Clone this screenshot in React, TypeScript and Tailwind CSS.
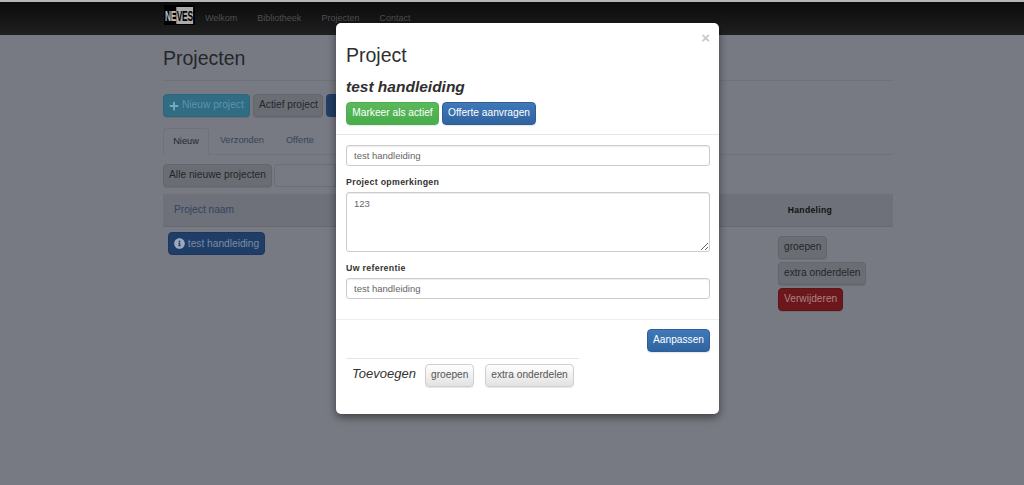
import { FaPlus, FaInfoCircle } from "react-icons/fa";
import type { ReactNode } from "react";

function Btn({ className, children }: { className: string; children: ReactNode }) {
  return (
    <button className={`h-[23px] rounded-[4px] border px-[5px] text-[10.2px] leading-none whitespace-nowrap shadow-[0_1px_1px_rgba(0,0,0,0.1)] ${className}`}>
      {children}
    </button>
  );
}

const dimGrey = "bg-[#6a6d74] border-[#63666d] text-[#25262a]";
const lightGrey = "bg-gradient-to-b from-white to-[#e2e2e2] border-[#cfcfcf] text-[#555]";
const blue = "bg-gradient-to-b from-[#4078b8] to-[#2f64a0] border-[#2d609a] text-white";

function Background() {
  return (
    <div className="pl-[163px]">
      <div className="w-[730px]">
        <h1 className="mt-[11px] text-[19.5px] leading-[24px] text-[#25262a]">Projecten</h1>
        <div className="mt-[10px] border-t border-[#6f7279]" />
        <div className="mt-[13px] flex gap-[3px]">
          <Btn className="flex w-[87px] items-center gap-[3px] border-[#2c667c] bg-[#306c84] text-[#5f93a8]">
            <FaPlus size={10} className="text-[#78a9bc]" />
            Nieuw project
          </Btn>
          <Btn className={`${dimGrey} w-[70px]`}>Actief project</Btn>
          <div className="h-[23px] w-[12px] rounded-l-[4px] bg-[#223e64]" />
        </div>
        <div className="mt-[11px] flex h-[27px] border-b border-[#6f7279] text-[9.2px]">
          <div className="flex h-[27px] w-[46px] items-center justify-center rounded-t-[4px] border border-b-0 border-[#6f7279] bg-[#777a82] text-[#26272b]">Nieuw</div>
          <div className="ml-[11px] flex h-[26px] items-center text-[#364359]">Verzonden</div>
          <div className="ml-[22px] flex h-[26px] items-center text-[#364359]">Offerte</div>
        </div>
        <div className="mt-[9px] flex gap-[2px]">
          <Btn className={`${dimGrey} w-[109px]`}>Alle nieuwe projecten</Btn>
          <div className="h-[23px] w-[62px] rounded-l-[4px] border border-[#6b6e75] bg-[#777a82]" />
        </div>
        <div className="mt-[7px] flex h-[33px] items-center border-b border-[#676a71] bg-[#6e7179] pl-[11px] pr-[61px]">
          <span className="text-[10.2px] text-[#344262]">Project naam</span>
          <span className="ml-auto text-[8.6px] font-bold tracking-[0.3px] text-[#111]">Handeling</span>
        </div>
        <div className="flex">
          <button className="ml-[5px] mt-[5px] flex h-[23px] w-[97px] items-center justify-center gap-[3px] rounded-[4px] border border-[#1b3760] bg-[#1f3d66] text-[10.2px] text-[#7c8ca6]">
            <FaInfoCircle size={11} className="text-[#9da9bc]" />
            test handleiding
          </button>
          <div className="ml-auto mr-[27px] mt-[9px] flex w-[88px] flex-col items-start gap-[3px]">
            <Btn className={`${dimGrey} w-[49px]`}>groepen</Btn>
            <Btn className={`${dimGrey} w-[88px]`}>extra onderdelen</Btn>
            <Btn className="w-[65px] border-[#621518] bg-[#6b171b] text-[#ad8385]">Verwijderen</Btn>
          </div>
        </div>
      </div>
    </div>
  );
}

function Modal() {
  return (
    <div className="absolute left-[336px] top-[23px] h-[391px] w-[383px] rounded-[5px] bg-white text-[#333] shadow-[0_3px_9px_rgba(0,0,0,0.5)]">
      <span className="absolute right-[9px] top-[6px] text-[15px] font-bold leading-[18px] text-[#c8c8c8]">×</span>
      <div className="px-[10px] pt-[20px]">
        <h2 className="text-[19.5px] leading-[24px] text-[#2f2f2f]">Project</h2>
        <h3 className="mt-[10px] text-[15.5px] font-bold italic leading-[20px] text-[#2f2f2f]">test handleiding</h3>
        <div className="mt-[5px] flex gap-[3px]">
          <Btn className="w-[93px] border-[#4cae4c] bg-gradient-to-b from-[#5cb85c] to-[#47ad4b] px-0 text-white">Markeer als actief</Btn>
          <Btn className={`${blue} w-[94px] px-0`}>Offerte aanvragen</Btn>
        </div>
      </div>
      <div className="mt-[9px] border-t border-[#e8e8e8]" />
      <div className="px-[10px] pt-[10px]">
        <input
          readOnly
          value="test handleiding"
          className="block h-[21px] w-[364px] rounded-[3px] border border-[#ccc] px-[7px] text-[9.5px] text-[#666] outline-none shadow-[inset_0_1px_1px_rgba(0,0,0,0.075)]"
        />
        <label className="mt-[11px] block text-[8.8px] font-bold leading-[11px] tracking-[0.3px] text-[#333]">Project opmerkingen</label>
        <textarea
          readOnly
          value="123"
          className="mt-[4px] block h-[60px] w-[364px] resize-y rounded-[3px] border border-[#ccc] px-[7px] py-[4px] font-['Liberation_Sans',sans-serif] text-[9.5px] leading-[14px] text-[#666] outline-none shadow-[inset_0_1px_1px_rgba(0,0,0,0.075)]"
        />
        <label className="mt-[11px] block text-[8.8px] font-bold leading-[11px] tracking-[0.3px] text-[#333]">Uw referentie</label>
        <input
          readOnly
          value="test handleiding"
          className="mt-[4px] block h-[21px] w-[364px] rounded-[3px] border border-[#ccc] px-[7px] text-[9.5px] text-[#666] outline-none shadow-[inset_0_1px_1px_rgba(0,0,0,0.075)]"
        />
      </div>
      <div className="mt-[20px] border-t border-[#eee]" />
      <div className="flex justify-end pr-[9px] pt-[9px]">
        <Btn className={`${blue} w-[63px] px-0`}>Aanpassen</Btn>
      </div>
      <div className="mx-[10px] mt-[6px] flex w-[233px] items-start border-t border-[#e5e5e5] pt-[5px]">
        <span className="ml-[6px] mt-[1px] w-[63px] text-[13px] italic leading-[17px] text-[#333]">Toevoegen</span>
        <Btn className={`${lightGrey} ml-[10px] w-[49px] px-0`}>groepen</Btn>
        <Btn className={`${lightGrey} ml-[11px] w-[89px] px-0`}>extra onderdelen</Btn>
      </div>
    </div>
  );
}

export default function App() {
  return (
    <div className="relative h-[485px] w-[1024px] overflow-hidden bg-[#777a82] font-['Liberation_Sans',Arial,sans-serif]">
      <div className="h-[2px] bg-[#b5b5b5]" />
      <nav className="flex h-[33px] items-start bg-gradient-to-b from-[#0b0b0b] to-[#202020] pl-[164px]">
        {/* logo */}
        <div className="mt-[3px] flex h-[20px] w-[31px] items-center justify-center overflow-hidden bg-black">
          <span className="scale-x-[0.56] whitespace-nowrap text-[15px] font-bold leading-none tracking-[-0.5px] text-[#bbb]">
            NE<span className="bg-[#aaa] px-[1px] text-black">VES</span>
          </span>
        </div>
        <div className="ml-[10px] mt-[10px] flex text-[9px] leading-[13px] text-[#4d4f54]">
          <span>Welkom</span>
          <span className="ml-[20px]">Bibliotheek</span>
          <span className="ml-[20px]">Projecten</span>
          <span className="ml-[20px]">Contact</span>
        </div>
      </nav>
      <Background />
      <Modal />
    </div>
  );
}
